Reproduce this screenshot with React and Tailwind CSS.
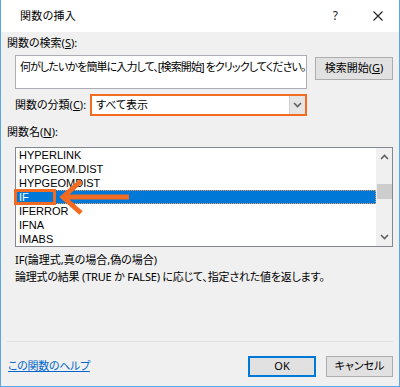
import React from 'react';

const jp = '[font-family:"Noto_Sans","Noto_Sans_CJK_JP",sans-serif] [font-feature-settings:"palt"]';

const functions = ['HYPERLINK', 'HYPGEOM.DIST', 'HYPGEOMDIST', 'IF', 'IFERROR', 'IFNA', 'IMABS'];

function Chevron({ down, className }) {
  return (
    <svg width="9" height="6" viewBox="0 0 9 6" className={className}>
      <path d={down ? 'M1 1 L4.5 4.5 L8 1' : 'M1 5 L4.5 1.5 L8 5'} fill="none" stroke="#606060" strokeWidth="1.6" />
    </svg>
  );
}

function Btn({ children, primary, className }) {
  return (
    <button
      className={`flex items-center justify-center bg-[#e1e1e1] text-[11px] text-black ${
        primary ? 'border-2 border-[#0078d7]' : 'border border-[#adadad]'
      } ${className}`}
    >
      {children}
    </button>
  );
}

export default function App() {
  return (
    <div className={`relative w-[400px] h-[387px] flex flex-col bg-[#f0f0f0] border-x border-b border-[#5aa6e6] text-[11px] text-black ${jp}`}>
      {/* title bar */}
      <div className="h-[32px] bg-white flex items-center pl-[19px] shrink-0">
        <span className="text-[11px] tracking-[0.3px]">関数の挿入</span>
        <span className="ml-auto mr-[35px] text-[12px] text-[#222]">?</span>
        <svg width="10" height="10" viewBox="0 0 10 10" className="mr-[16px]">
          <path d="M0.5 0.5 L9.5 9.5 M9.5 0.5 L0.5 9.5" stroke="#222" strokeWidth="1.1" />
        </svg>
      </div>

      <div className="flex-1 flex flex-col pl-[6px] pr-[6px]">
        <div className="mt-[3px] h-[16px] leading-[16px]">
          関数の検索(<span className="underline">S</span>):
        </div>

        <div className="mt-[4px] flex items-start ml-[8px]">
          <div className="w-[292px] h-[34px] bg-white border border-[#abadb3] pl-[4px] pt-[3px] leading-[16px] tracking-[-0.9px] whitespace-nowrap overflow-hidden">
            何がしたいかを簡単に入力して、[検索開始] をクリックしてください。
          </div>
          <Btn className="ml-[8px] mt-[2px] w-[78px] h-[23px]">
            検索開始(<span className="underline">G</span>)
          </Btn>
        </div>

        <div className="mt-[5px] flex items-center ml-[8px] h-[22px]">
          <span className="w-[75px] whitespace-nowrap">
            関数の分類(<span className="underline">C</span>):
          </span>
          <div className="w-[217px] h-[22px] border-2 border-[#f26b21] bg-white flex items-center">
            <span className="pl-[4px]">すべて表示</span>
            <div className="ml-auto h-full w-[16px] bg-[#e5e5e5] border-l border-[#cfcfcf] flex items-center justify-center">
              <Chevron down />
            </div>
          </div>
        </div>

        <div className="mt-[8px] h-[16px] leading-[16px]">
          関数名(<span className="underline">N</span>):
        </div>

        <div className="mt-[7px] ml-[8px] h-[100px] border border-[#828790] bg-white flex">
          <div className="flex-1 flex flex-col [font-family:'Liberation_Sans',sans-serif] text-[11px]">
            {functions.map((f) => (
              <div
                key={f}
                className={`h-[14px] leading-[14px] pl-[3px] ${
                  f === 'IF' ? 'bg-[#0078d7] text-white outline outline-1 outline-dotted outline-[#e8a060] -outline-offset-1' : ''
                }`}
              >
                {f}
              </div>
            ))}
          </div>
          <div className="w-[16px] bg-[#f0f0f0] flex flex-col items-center">
            <Chevron className="mt-[6px]" />
            <div className="mt-[24px] w-[15px] h-[15px] bg-[#cdcdcd]" />
            <Chevron down className="mt-auto mb-[6px]" />
          </div>
        </div>

        <div className="mt-[4px] ml-[8px] leading-[17px]">IF(論理式,真の場合,偽の場合)</div>
        <div className="ml-[8px] leading-[17px] tracking-[-0.2px]">
          論理式の結果 (TRUE か FALSE) に応じて、指定された値を返します。
        </div>

        <div className="mt-auto border-t border-[#dfdfdf] pt-[14px] pb-[9px] flex items-center">
          <a className="ml-[1px] text-[#0066cc] underline tracking-[-0.3px]">この関数のヘルプ</a>
          <Btn primary className="ml-auto w-[68px] h-[21px]">OK</Btn>
          <Btn className="ml-[10px] w-[67px] h-[21px]">キャンセル</Btn>
        </div>
      </div>

      {/* annotation overlays */}
      <div className="absolute left-[13px] top-[189px] w-[42px] h-[16px] border-[3px] border-[#f26b21]" />
      <svg className="absolute left-[55px] top-[178px]" width="80" height="38" viewBox="55 178 80 38">
        <path d="M128 197 L62 197 M80 181 L62 197 L80 213" fill="none" stroke="#f26b21" strokeWidth="5" />
      </svg>
    </div>
  );
}
